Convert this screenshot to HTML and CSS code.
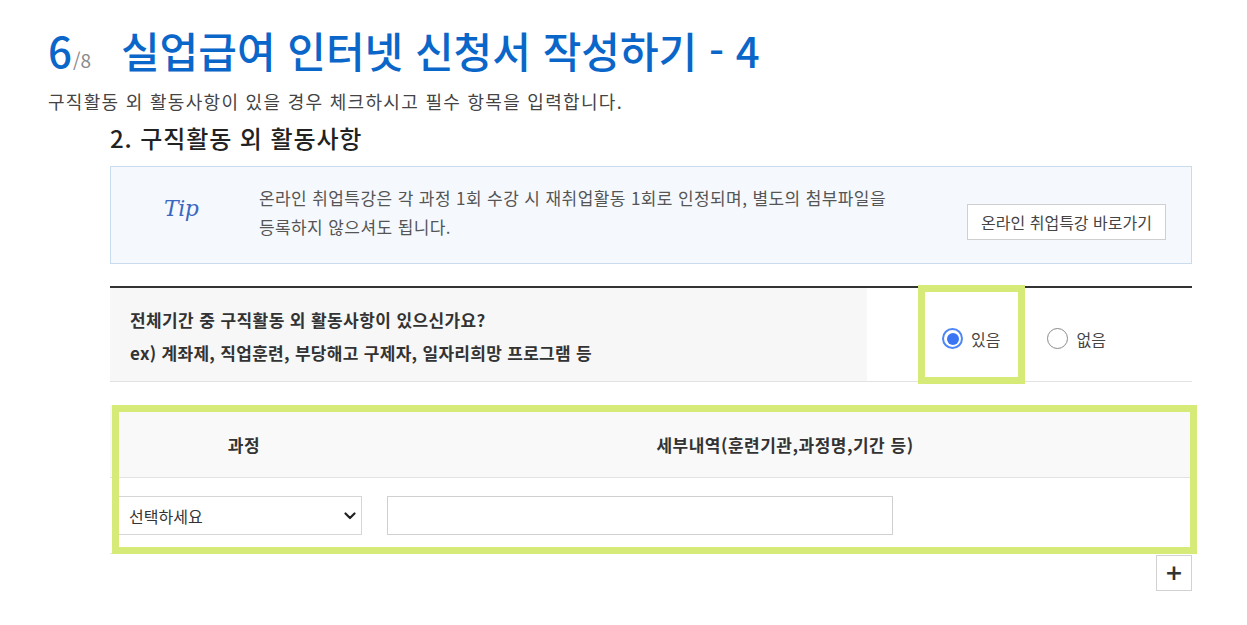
FILE: index.html
```html
<!DOCTYPE html>
<html lang="ko">
<head>
<meta charset="utf-8">
<title>실업급여 인터넷 신청서 작성하기 - 4</title>
<link rel="stylesheet" href="styles.css">
</head>
<body>
<div class="page">
  <h1 class="title"><span class="num">6</span><span class="total">/8</span><span class="title-text">실업급여 인터넷 신청서 작성하기 - 4</span></h1>
  <p class="desc">구직활동 외 활동사항이 있을 경우 체크하시고 필수 항목을 입력합니다.</p>
  <div class="content">
    <h2 class="section">2. 구직활동 외 활동사항</h2>
    <div class="tip">
      <span class="tip-label">Tip</span>
      <p class="tip-text">온라인 취업특강은 각 과정 1회 수강 시 재취업활동 1회로 인정되며, 별도의 첨부파일을<br>등록하지 않으셔도 됩니다.</p>
      <button class="tip-btn" type="button">온라인 취업특강 바로가기</button>
    </div>
    <div class="question">
      <div class="q-text">
        <p>전체기간 중 구직활동 외 활동사항이 있으신가요?</p>
        <p>ex) 계좌제, 직업훈련, 부당해고 구제자, 일자리희망 프로그램 등</p>
      </div>
      <div class="q-options">
        <label class="opt"><span class="radio checked"></span><span>있음</span></label>
        <label class="opt"><span class="radio"></span><span>없음</span></label>
      </div>
      <div class="mark mark-radio"></div>
    </div>
    <div class="table-wrap">
      <div class="t-head">
        <div class="col-a">과정</div>
        <div class="col-b">세부내역(훈련기관,과정명,기간 등)</div>
      </div>
      <div class="t-row">
        <div class="select"><span>선택하세요</span>
          <svg width="12" height="8" viewBox="0 0 12 8"><path d="M1.5 1.5 L6 6 L10.5 1.5" fill="none" stroke="#222" stroke-width="2.2" stroke-linecap="round" stroke-linejoin="round"/></svg>
        </div>
        <div class="input"></div>
      </div>
      <div class="mark mark-table"></div>
    </div>
    <div class="add-row"><button class="add-btn" type="button">+</button></div>
  </div>
</div>
</body>
</html>
```

FILE: styles.css
```css
* { box-sizing: border-box; }
html, body { margin: 0; padding: 0; background: #fff; }
body {
  font-family: "Noto Sans CJK KR", "Noto Sans", sans-serif;
  color: #333;
  width: 1247px;
  height: 625px;
  overflow: hidden;
}
p { margin: 0; }
.page { padding: 24px 0 0 48px; }

.title {
  margin: 0;
  height: 53px;
  line-height: 52px;
  font-weight: 500;
  color: #0b66c9;
  display: flex;
  align-items: baseline;
  white-space: nowrap;
}
.num { font-size: 42px; font-weight: 500; }
.total { font-size: 19px; color: #8a8a8a; font-weight: 400; margin-left: 1px; }
.title-text { font-size: 42px; margin-left: 30px; font-weight: 500; letter-spacing: 0; }

.desc {
  margin-top: 12px;
  font-size: 18px;
  line-height: 24px;
  color: #444;
  letter-spacing: 1.3px;
}

.content { width: 1082px; margin-left: 62px; }

.section {
  margin: 9px 0 0;
  font-size: 24px;
  line-height: 32px;
  font-weight: 500;
  color: #222;
  letter-spacing: 0.9px;
}

.tip {
  margin-top: 12px;
  height: 98px;
  border: 1px solid #c9dcee;
  background: #f5f9fe;
  display: flex;
  align-items: flex-start;
  padding: 16px 25px 0 53px;
}
.tip-label {
  font-family: "DejaVu Serif", serif;
  font-style: italic;
  font-size: 22px;
  line-height: 30px;
  color: #3a68c0;
  margin-top: 11px;
  width: 34px;
  letter-spacing: -0.5px;
}
.tip-text {
  margin-left: 61px;
  font-size: 17px;
  line-height: 29px;
  color: #555;
  letter-spacing: 0.4px;
}
.tip-btn {
  margin-left: auto;
  margin-top: 21px;
  width: 199px;
  height: 36px;
  background: #fff;
  border: 1px solid #cfcfcf;
  font-family: inherit;
  font-size: 16px;
  color: #444;
  padding: 0;
}

.question {
  position: relative;
  margin-top: 22px;
  border-top: 2px solid #333;
  border-bottom: 1px solid #e2e2e2;
  display: flex;
  height: 96px;
}
.q-text {
  width: 757px;
  background: #f7f7f7;
  padding: 15px 0 0 20px;
  font-size: 17px;
  line-height: 33px;
  font-weight: 700;
  color: #333;
  letter-spacing: 0.3px;
}
.q-text p:first-child { letter-spacing: 0.4px; }
.q-options {
  display: flex;
  align-items: center;
  padding: 8px 0 0 75px;
  gap: 47px;
}
.opt {
  display: flex;
  align-items: center;
  gap: 8px;
  font-size: 16px;
  color: #444;
}
.radio {
  width: 21px;
  height: 21px;
  border-radius: 50%;
  border: 1.5px solid #8a8a8a;
  background: #fff;
  position: relative;
}
.radio.checked { border: 2px solid #4d87f6; }
.radio.checked::after {
  content: "";
  position: absolute;
  left: 2.5px; top: 2.5px;
  width: 12px; height: 12px;
  border-radius: 50%;
  background: #3a76f4;
}

.mark {
  position: absolute;
  border: 7px solid #d6eb77;
  pointer-events: none;
}
.mark-radio { left: 808px; top: -3px; width: 107px; height: 99px; }

.table-wrap { position: relative; margin-top: 23px; }
.t-head {
  display: flex;
  height: 73px;
  background: #f9f9f9;
  border-bottom: 1px solid #e3e3e3;
  font-size: 17px;
  font-weight: 700;
  color: #333;
  padding-top: 7px;
  letter-spacing: 0.5px;
}
.t-head > div { display: flex; align-items: center; justify-content: center; }
.col-a { width: 268px; }
.col-b { flex: 1; }
.t-row {
  display: flex;
  height: 76px;
  border-bottom: 1px solid #e3e3e3;
  padding-top: 18px;
}
.select {
  margin-left: 2px;
  width: 250px;
  height: 39px;
  border: 1px solid #d6d6d6;
  display: flex;
  align-items: center;
  justify-content: space-between;
  padding: 0 5px 0 16px;
  font-size: 16px;
  color: #333;
  background: #fff;
}
.input {
  margin-left: 25px;
  width: 506px;
  height: 39px;
  border: 1px solid #d0d0d0;
  background: #fff;
}
.mark-table { left: 2px; top: 0; width: 1085px; height: 149px; }

.add-row { display: flex; justify-content: flex-end; margin-top: 1px; }
.add-btn {
  width: 36px;
  height: 36px;
  background: #fff;
  border: 1px solid #d2d2d2;
  font-family: "DejaVu Sans", sans-serif;
  font-size: 22px;
  font-weight: 700;
  color: #333;
  padding: 0;
  line-height: 1;
}
```
